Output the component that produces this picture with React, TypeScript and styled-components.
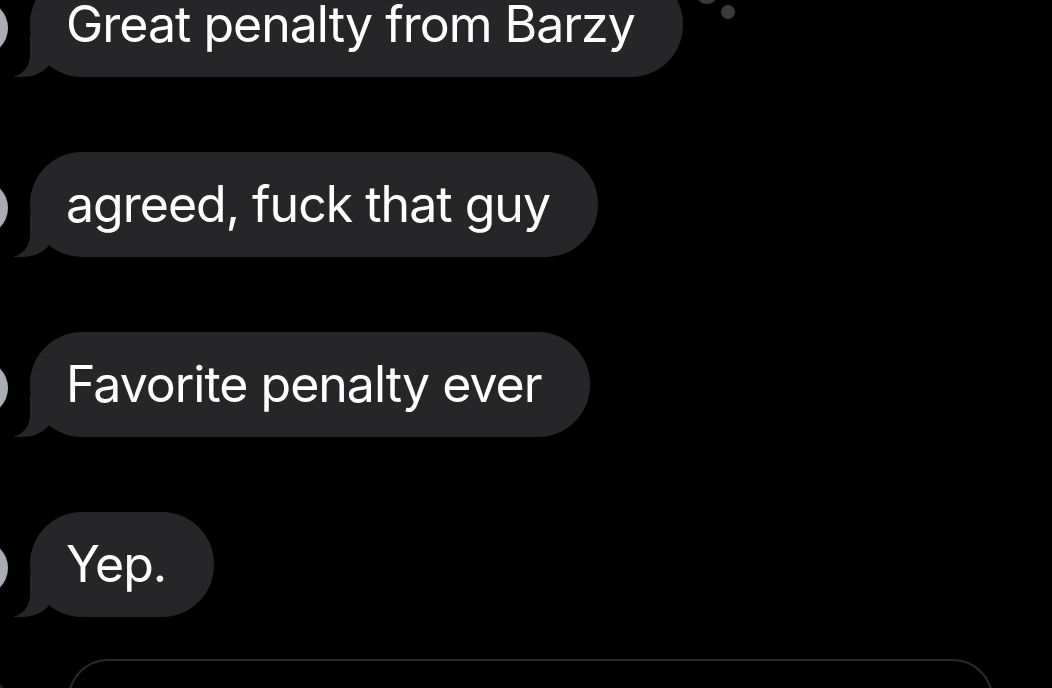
import React from "react";
import styled, { createGlobalStyle } from "styled-components";

const Global = createGlobalStyle`
  html, body { margin: 0; padding: 0; background: #000; }
  body { width: 1052px; height: 688px; overflow: hidden; font-family: Inter, "Noto Sans", sans-serif; }
`;

const Screen = styled.div`
  width: 1052px;
  height: 688px;
  overflow: hidden;
  background: #000;
`;

const Thread = styled.div`
  display: flex;
  flex-direction: column;
  gap: 75px;
  margin-top: -28px;
`;

const Row = styled.div`
  display: flex;
  align-items: flex-end;
`;

const Avatar = styled.div`
  position: relative;
  z-index: 2;
  flex: none;
  width: 56px;
  height: 56px;
  border-radius: 50%;
  background: #a9acb4;
  margin-left: -48px;
  margin-bottom: 21px;
`;

const Bubble = styled.div`
  position: relative;
  margin-left: 22px;
  background: #262629;
  color: #fff;
  border-radius: 52px;
  font-size: 50px;
  line-height: 60px;
  letter-spacing: -1px;
  padding: 22px 48px 23px 36px;
  white-space: nowrap;

  &::before {
    content: "";
    position: absolute;
    bottom: 0;
    left: -16px;
    width: 44px;
    height: 42px;
    background: #262629;
    border-bottom-right-radius: 34px 36px;
  }
  &::after {
    content: "";
    position: absolute;
    bottom: 0;
    left: -26px;
    width: 26px;
    height: 44px;
    background: #000;
    border-bottom-right-radius: 20px 22px;
  }
`;

const BubbleText = styled.span`
  position: relative;
  z-index: 1;
`;

const Reaction = styled.div`
  position: absolute;
  right: -53px;
  top: 28px;
  width: 40px;
  height: 30px;

  &::before,
  &::after {
    content: "";
    position: absolute;
    border-radius: 50%;
    background: #3a3a3e;
  }
  &::before {
    left: 0;
    top: -18px;
    width: 22px;
    height: 22px;
  }
  &::after {
    left: 25px;
    top: 5px;
    width: 14px;
    height: 14px;
  }
`;

const ComposerRow = styled.div`
  display: flex;
  align-items: flex-start;
  gap: 62px;
  margin-top: 42px;
`;

const PlusButton = styled.div`
  flex: none;
  width: 42px;
  height: 42px;
  margin-left: -36px;
  margin-top: 18px;
  border-radius: 50%;
  background: #1f1f22;
`;

const Composer = styled.div`
  width: 925px;
  height: 80px;
  box-sizing: border-box;
  border: 2px solid #2a2a2d;
  border-radius: 40px;
`;

const messages = [
  "Great penalty from Barzy",
  "agreed, fuck that guy",
  "Favorite penalty ever",
  "Yep.",
];

export default function App() {
  return (
    <Screen>
      <Global />
      <Thread>
        {messages.map((m, i) => (
          <Row key={m}>
            <Avatar />
            <Bubble>
              <BubbleText>{m}</BubbleText>
              {i === 0 && <Reaction />}
            </Bubble>
          </Row>
        ))}
      </Thread>
      <ComposerRow>
        <PlusButton />
        <Composer />
      </ComposerRow>
    </Screen>
  );
}
